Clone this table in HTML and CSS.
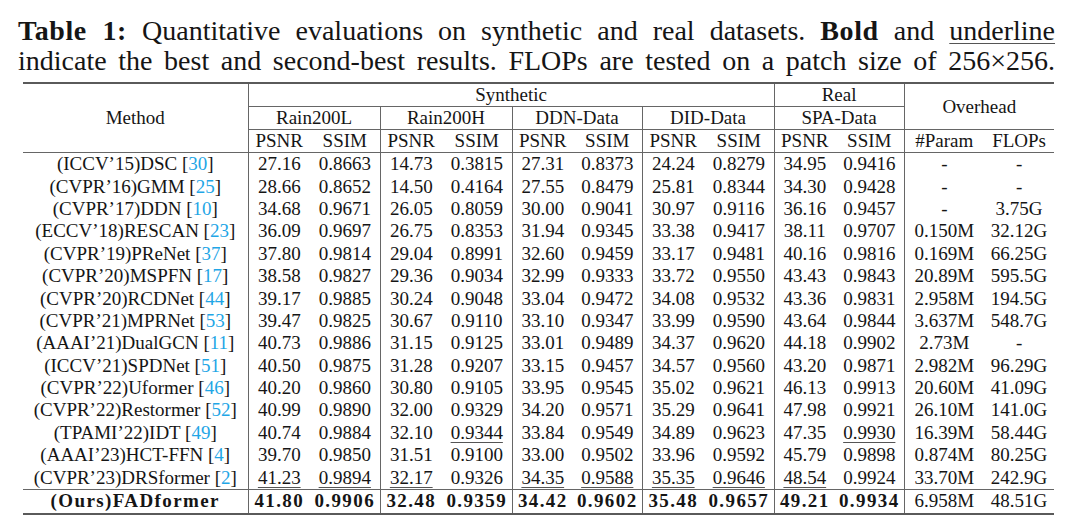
FILE: index.html
```html
<!DOCTYPE html>
<html>
<head>
<meta charset="utf-8">
<link rel="stylesheet" href="styles.css">
</head>
<body>
<div class="page">
  <div class="caption">
    <div class="cap-line"><b>Table 1:</b> Quantitative evaluations on synthetic and real datasets. <b>Bold</b> and <span class="ul">underline</span></div>
    <div class="cap-line">indicate the best and second-best results. FLOPs are tested on a patch size of 256×256.</div>
  </div>
  <table class="results">
    <colgroup>
      <col class="c-method">
      <col class="c-p"><col class="c-s">
      <col class="c-p"><col class="c-s">
      <col class="c-p2"><col class="c-s2">
      <col class="c-p"><col class="c-s">
      <col class="c-p2"><col class="c-s2">
      <col class="c-param"><col class="c-flops">
    </colgroup>
    <thead>
      <tr>
        <th rowspan="3" class="method">Method</th>
        <th colspan="8" class="vl">Synthetic</th>
        <th colspan="2" class="vl">Real</th>
        <th colspan="2" rowspan="2" class="vl">Overhead</th>
      </tr>
      <tr class="hl">
        <th colspan="2" class="vl">Rain200L</th>
        <th colspan="2" class="vl">Rain200H</th>
        <th colspan="2" class="vl">DDN-Data</th>
        <th colspan="2" class="vl">DID-Data</th>
        <th colspan="2" class="vl">SPA-Data</th>
      </tr>
      <tr class="hl">
        <th class="vl">PSNR</th><th>SSIM</th>
        <th class="vl">PSNR</th><th>SSIM</th>
        <th class="vl">PSNR</th><th>SSIM</th>
        <th class="vl">PSNR</th><th>SSIM</th>
        <th class="vl">PSNR</th><th>SSIM</th>
        <th class="vl">#Param</th><th>FLOPs</th>
      </tr>
    </thead>
    <tbody>
      <tr class="first">
        <td class="method">(ICCV’15)DSC [<span class="cite">30</span>]</td>
        <td class="vl">27.16</td><td>0.8663</td><td class="vl">14.73</td><td>0.3815</td><td class="vl">27.31</td><td>0.8373</td><td class="vl">24.24</td><td>0.8279</td><td class="vl">34.95</td><td>0.9416</td><td class="vl">-</td><td>-</td>
      </tr>
      <tr>
        <td class="method">(CVPR’16)GMM [<span class="cite">25</span>]</td>
        <td class="vl">28.66</td><td>0.8652</td><td class="vl">14.50</td><td>0.4164</td><td class="vl">27.55</td><td>0.8479</td><td class="vl">25.81</td><td>0.8344</td><td class="vl">34.30</td><td>0.9428</td><td class="vl">-</td><td>-</td>
      </tr>
      <tr>
        <td class="method">(CVPR’17)DDN [<span class="cite">10</span>]</td>
        <td class="vl">34.68</td><td>0.9671</td><td class="vl">26.05</td><td>0.8059</td><td class="vl">30.00</td><td>0.9041</td><td class="vl">30.97</td><td>0.9116</td><td class="vl">36.16</td><td>0.9457</td><td class="vl">-</td><td>3.75G</td>
      </tr>
      <tr>
        <td class="method">(ECCV’18)RESCAN [<span class="cite">23</span>]</td>
        <td class="vl">36.09</td><td>0.9697</td><td class="vl">26.75</td><td>0.8353</td><td class="vl">31.94</td><td>0.9345</td><td class="vl">33.38</td><td>0.9417</td><td class="vl">38.11</td><td>0.9707</td><td class="vl">0.150M</td><td>32.12G</td>
      </tr>
      <tr>
        <td class="method">(CVPR’19)PReNet [<span class="cite">37</span>]</td>
        <td class="vl">37.80</td><td>0.9814</td><td class="vl">29.04</td><td>0.8991</td><td class="vl">32.60</td><td>0.9459</td><td class="vl">33.17</td><td>0.9481</td><td class="vl">40.16</td><td>0.9816</td><td class="vl">0.169M</td><td>66.25G</td>
      </tr>
      <tr>
        <td class="method">(CVPR’20)MSPFN [<span class="cite">17</span>]</td>
        <td class="vl">38.58</td><td>0.9827</td><td class="vl">29.36</td><td>0.9034</td><td class="vl">32.99</td><td>0.9333</td><td class="vl">33.72</td><td>0.9550</td><td class="vl">43.43</td><td>0.9843</td><td class="vl">20.89M</td><td>595.5G</td>
      </tr>
      <tr>
        <td class="method">(CVPR’20)RCDNet [<span class="cite">44</span>]</td>
        <td class="vl">39.17</td><td>0.9885</td><td class="vl">30.24</td><td>0.9048</td><td class="vl">33.04</td><td>0.9472</td><td class="vl">34.08</td><td>0.9532</td><td class="vl">43.36</td><td>0.9831</td><td class="vl">2.958M</td><td>194.5G</td>
      </tr>
      <tr>
        <td class="method">(CVPR’21)MPRNet [<span class="cite">53</span>]</td>
        <td class="vl">39.47</td><td>0.9825</td><td class="vl">30.67</td><td>0.9110</td><td class="vl">33.10</td><td>0.9347</td><td class="vl">33.99</td><td>0.9590</td><td class="vl">43.64</td><td>0.9844</td><td class="vl">3.637M</td><td>548.7G</td>
      </tr>
      <tr>
        <td class="method">(AAAI’21)DualGCN [<span class="cite">11</span>]</td>
        <td class="vl">40.73</td><td>0.9886</td><td class="vl">31.15</td><td>0.9125</td><td class="vl">33.01</td><td>0.9489</td><td class="vl">34.37</td><td>0.9620</td><td class="vl">44.18</td><td>0.9902</td><td class="vl">2.73M</td><td>-</td>
      </tr>
      <tr>
        <td class="method">(ICCV’21)SPDNet [<span class="cite">51</span>]</td>
        <td class="vl">40.50</td><td>0.9875</td><td class="vl">31.28</td><td>0.9207</td><td class="vl">33.15</td><td>0.9457</td><td class="vl">34.57</td><td>0.9560</td><td class="vl">43.20</td><td>0.9871</td><td class="vl">2.982M</td><td>96.29G</td>
      </tr>
      <tr>
        <td class="method">(CVPR’22)Uformer [<span class="cite">46</span>]</td>
        <td class="vl">40.20</td><td>0.9860</td><td class="vl">30.80</td><td>0.9105</td><td class="vl">33.95</td><td>0.9545</td><td class="vl">35.02</td><td>0.9621</td><td class="vl">46.13</td><td>0.9913</td><td class="vl">20.60M</td><td>41.09G</td>
      </tr>
      <tr>
        <td class="method">(CVPR’22)Restormer [<span class="cite">52</span>]</td>
        <td class="vl">40.99</td><td>0.9890</td><td class="vl">32.00</td><td>0.9329</td><td class="vl">34.20</td><td>0.9571</td><td class="vl">35.29</td><td>0.9641</td><td class="vl">47.98</td><td>0.9921</td><td class="vl">26.10M</td><td>141.0G</td>
      </tr>
      <tr>
        <td class="method">(TPAMI’22)IDT [<span class="cite">49</span>]</td>
        <td class="vl">40.74</td><td>0.9884</td><td class="vl">32.10</td><td><span class="ul">0.9344</span></td><td class="vl">33.84</td><td>0.9549</td><td class="vl">34.89</td><td>0.9623</td><td class="vl">47.35</td><td><span class="ul">0.9930</span></td><td class="vl">16.39M</td><td>58.44G</td>
      </tr>
      <tr>
        <td class="method">(AAAI’23)HCT-FFN [<span class="cite">4</span>]</td>
        <td class="vl">39.70</td><td>0.9850</td><td class="vl">31.51</td><td>0.9100</td><td class="vl">33.00</td><td>0.9502</td><td class="vl">33.96</td><td>0.9592</td><td class="vl">45.79</td><td>0.9898</td><td class="vl">0.874M</td><td>80.25G</td>
      </tr>
      <tr>
        <td class="method">(CVPR’23)DRSformer [<span class="cite">2</span>]</td>
        <td class="vl"><span class="ul">41.23</span></td><td><span class="ul">0.9894</span></td><td class="vl"><span class="ul">32.17</span></td><td>0.9326</td><td class="vl"><span class="ul">34.35</span></td><td><span class="ul">0.9588</span></td><td class="vl"><span class="ul">35.35</span></td><td><span class="ul">0.9646</span></td><td class="vl"><span class="ul">48.54</span></td><td>0.9924</td><td class="vl">33.70M</td><td>242.9G</td>
      </tr>
      <tr class="ours">
        <td class="method b">(Ours)FADformer</td>
        <td class="vl b">41.80</td><td class="b">0.9906</td><td class="vl b">32.48</td><td class="b">0.9359</td><td class="vl b">34.42</td><td class="b">0.9602</td><td class="vl b">35.48</td><td class="b">0.9657</td><td class="vl b">49.21</td><td class="b">0.9934</td><td class="vl">6.958M</td><td>48.51G</td>
      </tr>
    </tbody>
  </table>
</div>
</body>
</html>
```

FILE: styles.css
```css
html, body {
  margin: 0;
  padding: 0;
  background: #ffffff;
}

body {
  font-family: "Liberation Serif", "DejaVu Serif", serif;
  color: #151515;
}

.page {
  padding: 16px 0 0 18px;
  width: 1037px;
}

.caption {
  font-size: 28px;
  line-height: 30px;
}

.cap-line {
  text-align: justify;
  text-align-last: justify;
  white-space: nowrap;
}

.caption b {
  font-weight: bold;
  letter-spacing: 0.6px;
}

.ul {
  text-decoration: underline;
  text-decoration-color: #555;
  text-decoration-thickness: 1px;
  text-underline-offset: 3px;
}

.results {
  margin: 6px 0 0 5px;
  border-collapse: collapse;
  table-layout: fixed;
  width: 1031px;
  font-size: 19px;
  border-top: 2px solid #5a5a5a;
  border-bottom: 2px solid #5a5a5a;
}

.c-method { width: 225px; }
.c-p { width: 62px; }
.c-s { width: 70px; }
.c-p2 { width: 61px; }
.c-s2 { width: 69px; }
.c-param { width: 80px; }
.c-flops { width: 70px; }

.results th,
.results td {
  padding: 0;
  height: 22.4px;
  line-height: 20px;
  text-align: center;
  font-weight: normal;
  white-space: nowrap;
  vertical-align: middle;
}

.results thead th {
  height: 22px;
}

.results .vl {
  border-left: 1px solid #666;
}

.results .method {
  border-right: 1px solid #666;
}

.results tr.hl th {
  border-top: 1px solid #666;
}

.results tr.first td {
  border-top: 1px solid #666;
}

.results tr.ours td {
  border-top: 1px solid #666;
  height: 23px;
}

.results .b {
  font-weight: bold;
  letter-spacing: 1.4px;
}

.cite {
  color: #1fa6e6;
}
```
